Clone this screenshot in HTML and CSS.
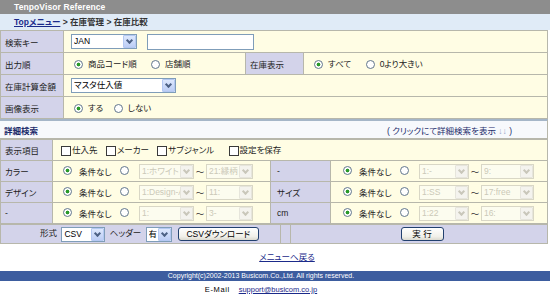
FILE: index.html
```html
<!DOCTYPE html>
<html lang="ja">
<head>
  <meta charset="UTF-8">
  <title>TenpoVisor Reference</title>
  <link rel="stylesheet" href="styles.css">
</head>
<body>
  <div class="title">TenpoVisor Reference</div>
  <div class="crumb"><a href="#">Topメニュー</a> &gt; 在庫管理 &gt; 在庫比較</div>

  <div class="page">
    <table class="grid">
      <colgroup><col class="c63"><col class="c182"><col class="c58"><col></colgroup>
      <tr>
        <td class="lbl">検索キー</td>
        <td colspan="3" class="val">
          <span class="sel w66"><select><option>JAN</option></select><span class="arr"></span></span>
          <input type="text" class="txt">
        </td>
      </tr>
      <tr>
        <td class="lbl">出力順</td>
        <td class="val rad">
          <label class="opt"><input type="radio" name="order" checked>商品コード順</label>
          <label class="opt"><input type="radio" name="order">店舗順</label>
        </td>
        <td class="lbl">在庫表示</td>
        <td class="val rad">
          <label class="opt"><input type="radio" name="zaiko" checked>すべて</label>
          <label class="opt"><input type="radio" name="zaiko">0より大きい</label>
        </td>
      </tr>
      <tr>
        <td class="lbl">在庫計算金額</td>
        <td colspan="3" class="val">
          <span class="sel w105"><select><option>マスタ仕入値</option></select><span class="arr"></span></span>
        </td>
      </tr>
      <tr>
        <td class="lbl">画像表示</td>
        <td colspan="3" class="val rad">
          <label class="opt"><input type="radio" name="img" checked>する</label>
          <label class="opt tight"><input type="radio" name="img">しない</label>
        </td>
      </tr>
    </table>

    <div class="detail">
      <span class="detail-title">詳細検索</span>
      <span class="detail-open">( クリックにて詳細検索を表示 <span class="arrows">↓↓</span> )</span>
    </div>

    <table class="grid sub">
      <colgroup><col class="c52"><col class="c218"><col class="c60"><col></colgroup>
      <tr>
        <td class="lbl">表示項目</td>
        <td colspan="3" class="val chk">
          <label class="box"><input type="checkbox">仕入先</label>
          <label class="box"><input type="checkbox">メーカー</label>
          <label class="box"><input type="checkbox">サブジャンル</label>
          <label class="box wide"><input type="checkbox">設定を保存</label>
        </td>
      </tr>
      <tr>
        <td class="lbl">カラー</td>
        <td class="val cond">
          <input type="radio" name="color" checked><span class="none">条件なし</span><input type="radio" name="color">
          <span class="sel off w55"><select disabled><option>1:ホワイト</option></select><span class="arr"></span></span><span class="tilde">～</span><span class="sel off w47"><select disabled><option>21:縁柄</option></select><span class="arr"></span></span>
        </td>
        <td class="lbl r">-</td>
        <td class="val cond r">
          <input type="radio" name="c1" checked><span class="none">条件なし</span><input type="radio" name="c1">
          <span class="sel off w50"><select disabled><option>1:-</option></select><span class="arr"></span></span><span class="tilde">～</span><span class="sel off w53"><select disabled><option>9:</option></select><span class="arr"></span></span>
        </td>
      </tr>
      <tr>
        <td class="lbl">デザイン</td>
        <td class="val cond">
          <input type="radio" name="design" checked><span class="none">条件なし</span><input type="radio" name="design">
          <span class="sel off w55"><select disabled><option>1:Design-A</option></select><span class="arr"></span></span><span class="tilde">～</span><span class="sel off w47"><select disabled><option>11:</option></select><span class="arr"></span></span>
        </td>
        <td class="lbl r">サイズ</td>
        <td class="val cond r">
          <input type="radio" name="size" checked><span class="none">条件なし</span><input type="radio" name="size">
          <span class="sel off w50"><select disabled><option>1:SS</option></select><span class="arr"></span></span><span class="tilde">～</span><span class="sel off w53"><select disabled><option>17:free</option></select><span class="arr"></span></span>
        </td>
      </tr>
      <tr>
        <td class="lbl">-</td>
        <td class="val cond">
          <input type="radio" name="c2" checked><span class="none">条件なし</span><input type="radio" name="c2">
          <span class="sel off w55"><select disabled><option>1:</option></select><span class="arr"></span></span><span class="tilde">～</span><span class="sel off w47"><select disabled><option>3-</option></select><span class="arr"></span></span>
        </td>
        <td class="lbl r">cm</td>
        <td class="val cond r">
          <input type="radio" name="cm" checked><span class="none">条件なし</span><input type="radio" name="cm">
          <span class="sel off w50"><select disabled><option>1:22</option></select><span class="arr"></span></span><span class="tilde">～</span><span class="sel off w53"><select disabled><option>16:</option></select><span class="arr"></span></span>
        </td>
      </tr>
    </table>

    <table class="bar">
      <colgroup><col class="c280"><col class="c10"><col></colgroup>
      <tr>
        <td class="dl">
          形式 <span class="sel w44"><select><option>CSV</option></select><span class="arr"></span></span>
          ヘッダー <span class="sel w26"><select><option>有</option></select><span class="arr"></span></span>
          <button type="button" class="btn dlbtn">CSVダウンロード</button>
        </td>
        <td></td>
        <td class="run"><button type="submit" class="btn runbtn">実 行</button></td>
      </tr>
    </table>
  </div>

  <div class="back"><a href="#">メニューへ戻る</a></div>
  <div class="copy">Copyright(c)2002-2013 Busicom.Co.,Ltd. All rights reserved.</div>
  <div class="mail"><span class="mail-lbl">E-Mail</span><a href="#">support@busicom.co.jp</a></div>
</body>
</html>
```

FILE: styles.css
```css
body {
  margin: 0;
  font-family: "Liberation Sans", "Noto Sans CJK JP", sans-serif;
  font-size: 8.5px;
  font-feature-settings: "palt";
  color: #222;
  background-color: #fff;
}

.title {
  height: 14px;
  line-height: 14px;
  padding-left: 14px;
  background-color: #8d8d8d;
  color: #fff;
  font-weight: bold;
  letter-spacing: 0.1px;
}

.crumb {
  height: 16px;
  line-height: 16px;
  padding-left: 14px;
  background-color: #e0ebf7;
  color: #333;
  font-weight: bold;
}

.crumb a {
  color: #1b2a8a;
}

.page {
  width: 548px;
}

/* form tables */
.grid {
  width: 548px;
  border-collapse: collapse;
  table-layout: fixed;
}

.grid td {
  height: 21px;
  padding: 0;
  border: 1px solid #b7b7ab;
  background-color: #fffde4;
  white-space: nowrap;
  overflow: hidden;
}

.grid.sub td {
  height: 20px;
}

.grid td.lbl {
  background-color: #d3d3ea;
  padding-left: 4px;
  color: #222;
}

.grid td.lbl.r {
  padding-left: 6px;
}

.grid td.val {
  padding-left: 7px;
}

.grid td.rad {
  padding-left: 10px;
}

.grid td.chk {
  padding-left: 8px;
}

.grid td.cond {
  padding-left: 10px;
}

.grid td.cond.r {
  padding-left: 12px;
}

.c63 { width: 63px; }
.c182 { width: 182px; }
.c58 { width: 58px; }
.c52 { width: 52px; }
.c218 { width: 218px; }
.c60 { width: 60px; }
.c280 { width: 280px; }
.c10 { width: 10px; }

.opt {
  display: inline-block;
  vertical-align: middle;
}

.opt + .opt {
  margin-left: 12px;
}

.opt.tight {
  margin-left: 8px;
}

.box {
  display: inline-block;
  vertical-align: middle;
  margin-right: 6px;
}

.box.wide {
  margin-left: 6px;
}

/* radios and checkboxes */
input[type="radio"] {
  appearance: none;
  -webkit-appearance: none;
  box-sizing: border-box;
  width: 9px;
  height: 9px;
  margin: 0 5px 1px 0;
  border: 1px solid #62768c;
  border-radius: 50%;
  background-color: #fff;
  vertical-align: middle;
}

input[type="radio"]:checked {
  background: radial-gradient(circle, #2a9a2a 0, #2a9a2a 1.6px, #fff 2.2px);
}

input[type="checkbox"] {
  appearance: none;
  -webkit-appearance: none;
  box-sizing: border-box;
  width: 10px;
  height: 10px;
  margin: 0 1px 1px 0;
  border: 1px solid #3a3a3a;
  background-color: #fff;
  vertical-align: middle;
}

.cond .none {
  margin-left: 2px;
  margin-right: 8px;
  vertical-align: middle;
}

.cond input[type="radio"] + .sel,
.cond .sel:first-of-type {
  margin-left: 3px;
}

.tilde {
  display: inline-block;
  width: 12px;
  text-align: center;
  vertical-align: middle;
  color: #333;
}

/* select boxes */
.sel {
  position: relative;
  display: inline-block;
  vertical-align: middle;
  height: 15px;
}

.sel select {
  appearance: none;
  -webkit-appearance: none;
  box-sizing: border-box;
  width: 100%;
  height: 15px;
  margin: 0;
  padding: 0 12px 0 2px;
  border: 1px solid #7f9db9;
  border-radius: 0;
  background-color: #fff;
  color: #000;
  font: inherit;
  line-height: 13px;
}

.sel .arr {
  position: absolute;
  top: 1px;
  right: 1px;
  width: 13px;
  height: 13px;
  box-sizing: border-box;
  border: 1px solid #b4c8f2;
  border-radius: 1px;
  background: linear-gradient(#dde8fd, #bccdf5);
  pointer-events: none;
}

.sel .arr::after {
  content: "";
  position: absolute;
  left: 3px;
  top: 2px;
  width: 3px;
  height: 3px;
  border-right: 2px solid #4d6185;
  border-bottom: 2px solid #4d6185;
  transform: rotate(45deg);
}

.sel.off select {
  border-color: #c9c7ba;
  background-color: #fcfcf5;
  color: #b5b3a6;
}

.sel.off .arr {
  border-color: #e6e5dc;
  background: #f4f3ee;
}

.sel.off .arr::after {
  border-color: #c9c7ba;
}

.w66 { width: 66px; }
.w105 { width: 105px; }
.w55 { width: 55px; }
.w47 { width: 47px; }
.w50 { width: 50px; }
.w53 { width: 53px; }
.w44 { width: 44px; }
.w26 { width: 26px; }

.txt {
  box-sizing: border-box;
  width: 107px;
  height: 16px;
  margin: 0 0 0 8px;
  border: 1px solid #7f9db9;
  vertical-align: middle;
}

/* detail header */
.detail {
  display: flex;
  justify-content: space-between;
  align-items: center;
  height: 17px;
  padding: 0 35px 0 4px;
  border-top: 2px solid #a5b6c8;
  border-bottom: 1px solid #b7b7ab;
  border-right: 1px solid #b7b7ab;
  background-color: #f7f9fc;
  color: #1b2b6b;
}

.detail-title {
  font-weight: bold;
}

.arrows {
  color: #8ea0c4;
}

/* bottom bar */
.bar {
  width: 548px;
  border-collapse: collapse;
  table-layout: fixed;
}

.bar td {
  height: 18px;
  padding: 0;
  border: 1px solid #b7b7ab;
  background-color: #d3d3ea;
  white-space: nowrap;
}

.bar td.dl {
  padding-left: 39px;
}

.bar td.run {
  text-align: center;
}

.dl .sel {
  margin: 0 2px;
}

.btn {
  box-sizing: border-box;
  height: 14px;
  padding: 0;
  border: 1px solid #22406f;
  border-radius: 3px;
  background: linear-gradient(#ffffff, #f1f0ea 70%, #dcdad0);
  color: #000;
  font: inherit;
  line-height: 12px;
  vertical-align: middle;
  cursor: pointer;
}

.dlbtn {
  width: 81px;
  margin-left: 2px;
}

.runbtn {
  width: 43px;
  margin-left: 6px;
}

/* footer */
.back {
  margin-top: 7px;
  padding-left: 24px;
  line-height: 12px;
  text-align: center;
}

.back a {
  color: #1b2a8a;
}

.copy {
  margin-top: 8px;
  height: 10px;
  line-height: 10px;
  padding-right: 28px;
  background-color: #3d5d9f;
  color: #fff;
  font-size: 7px;
  text-align: center;
}

.mail {
  margin-top: 3px;
  padding-right: 28px;
  line-height: 12px;
  text-align: center;
  font-size: 7.5px;
}

.mail-lbl {
  letter-spacing: 0.6px;
  margin-right: 9px;
  color: #000;
}

.mail a {
  color: #1b2a8a;
}
```
